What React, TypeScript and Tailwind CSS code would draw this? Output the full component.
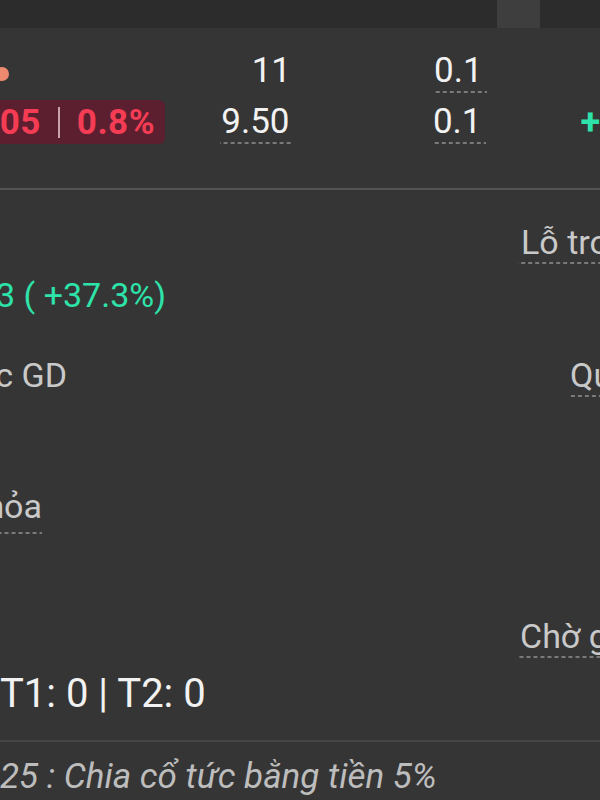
const dash =
  "bg-[linear-gradient(90deg,#7a7a7a_55%,transparent_55%)] bg-[length:7px_2px] bg-repeat-x bg-bottom";

function Dashed({ children, className = "" }: { children: React.ReactNode; className?: string }) {
  return <span className={`${dash} pb-[2px] ${className}`}>{children}</span>;
}

export default function App() {
  return (
    <div className="w-[600px] h-[800px] overflow-hidden bg-[#353535] font-['Roboto',sans-serif] whitespace-nowrap">
      {/* tab strip */}
      <div className="flex h-[28px] bg-[#2c2c2c]">
        <div className="w-[497px]" />
        <div className="w-[43px] bg-[#3e3e3e]" />
      </div>

      {/* price rows */}
      <div className="pt-[18px] text-[35px] text-[#f2f2f2]">
        <div className="flex h-[50px] items-center leading-[50px]">
          <div className="flex w-[166px] items-center">
            <span className="-ml-[5px] mt-[6px] h-[14px] w-[14px] rounded-full bg-[#ee8a70]" />
          </div>
          <div className="w-[125px] text-right">11</div>
          <div className="w-[143px]" />
          <div className="w-[148px]">
            <Dashed className="pr-[4px]">0.1</Dashed>
          </div>
        </div>

        <div className="mt-[1px] flex h-[50px] items-center leading-[50px]">
          <div className="flex w-[165px] justify-end">
            <div className="flex h-[44px] items-center rounded-[6px] bg-[#5b1f2f] pl-[20px] pr-[10px] text-[35px] font-bold leading-none tracking-[0.5px] text-[#f43c55]">
              <span>+1.05</span>
              <span className="mx-[17px] h-[31px] w-[2px] bg-[#c9a3ab]" />
              <span>0.8%</span>
            </div>
          </div>
          <div className="w-[126px] text-right">
            <Dashed className="px-[1px]">9.50</Dashed>
          </div>
          <div className="w-[143px]" />
          <div className="w-[148px]">
            <Dashed className="pr-[4px]">0.1</Dashed>
          </div>
          <div className="text-[36px] font-bold text-[#2ee3a9]">+</div>
        </div>
      </div>

      <div className="mt-[41px] h-[2px] bg-[#545454]" />

      {/* details */}
      <div className="flex text-[34px] leading-[56px]">
        <div className="w-[518px] shrink-0">
          <div className="mt-[77px] flex h-[56px] w-[166px] justify-end text-[#2ee3a9]">
            <span>+2.73 ( +37.3%)</span>
          </div>
          <div className="mt-[24px] flex h-[56px] w-[67px] justify-end text-[#c9c9c9]">
            <span>Tổng KL thực GD</span>
          </div>
          <div className="mt-[75px] flex h-[56px] w-[42px] justify-end text-[#c9c9c9]">
            <Dashed>Vốn hỏa</Dashed>
          </div>
          <div className="mt-[132px] h-[56px] text-[40px] text-[#f2f2f2]">T1: 0 | T2: 0</div>
        </div>
        <div className="text-[#c9c9c9]">
          <div className="mt-[24px] h-[56px]">
            <Dashed className="pl-[3px]">Lỗ trong ngày</Dashed>
          </div>
          <div className="mt-[77px] h-[56px] pl-[50px]">
            <Dashed className="pl-[2px]">Quyền</Dashed>
          </div>
          <div className="mt-[205px] h-[56px]">
            <Dashed className="pl-[2px]">Chờ giao</Dashed>
          </div>
        </div>
      </div>

      <div className="mt-[18px] h-[2px] bg-[#464646]" />

      <div className="mt-[11px] h-[48px] text-[35px] italic leading-[48px] text-[#bdbdbd]">
        25 : Chia cổ tức bằng tiền 5%
      </div>
    </div>
  );
}
